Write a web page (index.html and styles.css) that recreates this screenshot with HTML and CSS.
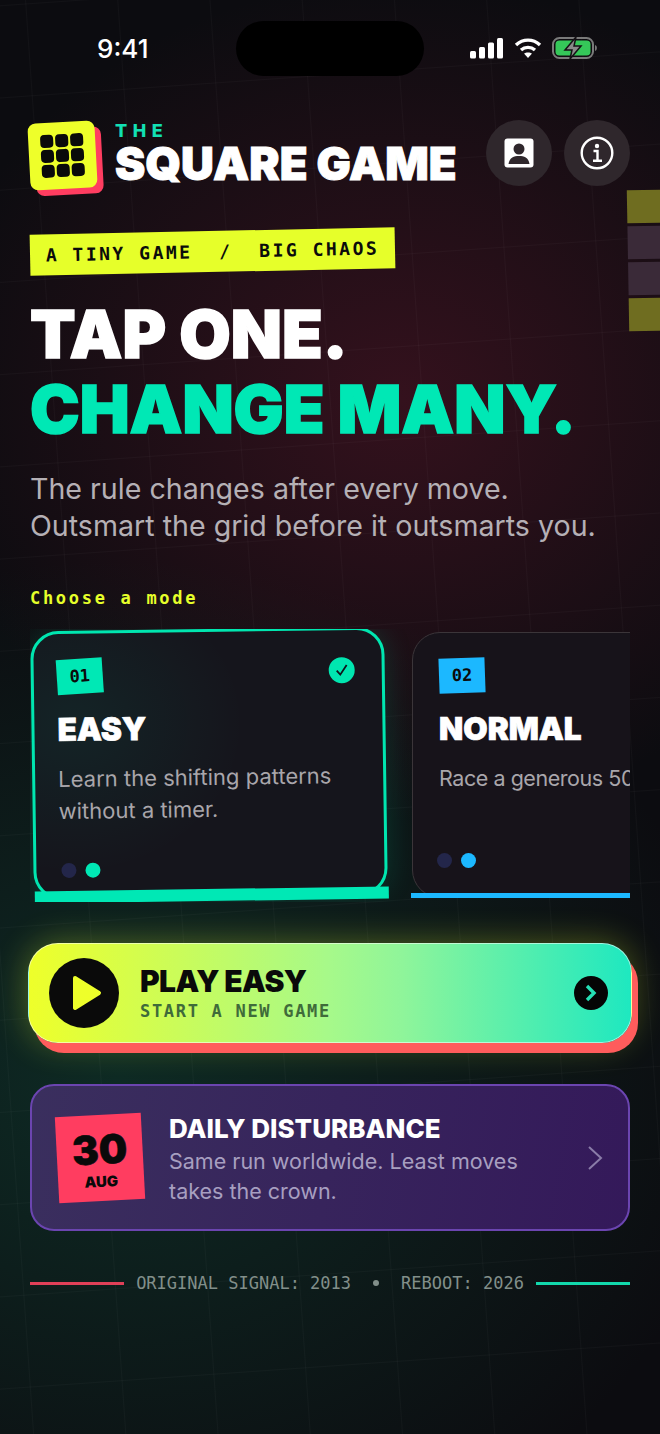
FILE: index.html
```html
<!DOCTYPE html>
<html lang="en">
<head>
    <meta charset="UTF-8">
    <meta name="viewport" content="width=device-width, initial-scale=1.0">
    <title>The Square Game</title>
    <link rel="stylesheet" href="styles.css">
</head>
<body>
    <div class="screen">
        <div class="grid-lines"></div>
        <div class="island"></div>

        <div class="deco">
            <span class="deco-olive"></span>
            <span class="deco-dim"></span>
            <span class="deco-dim"></span>
            <span class="deco-olive"></span>
        </div>

        <div class="status">
            <span class="time">9:41</span>
            <div class="status-icons">
                <svg width="34" height="21" viewBox="0 0 34 21" fill="#fff">
                    <rect x="0" y="13" width="6" height="7.5" rx="1.5"/>
                    <rect x="9" y="9" width="6" height="11.5" rx="1.5"/>
                    <rect x="18" y="4.5" width="6" height="16" rx="1.5"/>
                    <rect x="27" y="0" width="6" height="20.5" rx="1.5"/>
                </svg>
                <svg width="28" height="22" viewBox="0 0 28 22" fill="none" stroke="#fff" stroke-width="3.4">
                    <path d="M2 8 C9 1.5 19 1.5 26 8"/>
                    <path d="M7 13 C11 9.5 17 9.5 21 13"/>
                    <path d="M14 21 L10 16.5 C12 15 16 15 18 16.5 Z" fill="#fff" stroke="none"/>
                </svg>
                <svg width="46" height="24" viewBox="0 0 46 24">
                    <rect x="1" y="2" width="40" height="20" rx="6.5" fill="none" stroke="#7a7a7a" stroke-width="2"/>
                    <rect x="3.5" y="4.5" width="35" height="15" rx="4" fill="#35c759"/>
                    <path d="M43 9 C45.5 9.5 45.5 14.5 43 15 Z" fill="#7a7a7a"/>
                    <path d="M24 1 L13 14 H20 L18 23 L29 10 H22 Z" fill="#8a8a8a" stroke="#141014" stroke-width="1.5"/>
                </svg>
            </div>
        </div>

        <main class="content">
            <header class="header">
                <div class="brand">
                    <div class="mark">
                        <i></i><i></i><i></i><i></i><i></i><i></i><i></i><i></i><i></i>
                    </div>
                    <div class="wordmark">
                        <span class="the">THE</span>
                        <span class="name">SQUARE GAME</span>
                    </div>
                </div>
                <div class="header-btns">
                    <button class="round-btn">
                        <svg width="30" height="30" viewBox="0 0 30 30">
                            <rect x="0.5" y="0.5" width="29" height="29" rx="3" fill="#fff"/>
                            <circle cx="15" cy="11" r="5.5" fill="#2f272c"/>
                            <path d="M4.5 26 C5.5 19.5 10 18 15 18 C20 18 24.5 19.5 25.5 26 Z" fill="#2f272c"/>
                        </svg>
                    </button>
                    <button class="round-btn">
                        <svg width="34" height="34" viewBox="0 0 34 34" fill="none" stroke="#fff">
                            <circle cx="17" cy="17" r="15.3" stroke-width="2.4"/>
                            <circle cx="17" cy="10" r="2.2" fill="#fff" stroke="none"/>
                            <path d="M13.5 15 H17.5 V24.5 M13 24.8 H22" stroke-width="2.4"/>
                        </svg>
                    </button>
                </div>
            </header>

            <div class="tag">A TINY GAME&nbsp;&nbsp;/&nbsp;&nbsp;BIG CHAOS</div>

            <h1 class="hero">TAP ONE.<br><span class="hero-accent">CHANGE MANY.</span></h1>
            <p class="lead">The rule changes after every move.<br>Outsmart the grid before it outsmarts you.</p>

            <div class="section-label">Choose a mode</div>

            <div class="modes">
                <div class="mode-card mode-easy">
                    <span class="badge">01</span>
                    <span class="check">
                        <svg width="14" height="14" viewBox="0 0 14 14" fill="none" stroke="#10131a" stroke-width="1.8">
                            <path d="M2 7.5 L5.5 11.5 L12 2"/>
                        </svg>
                    </span>
                    <h2>EASY</h2>
                    <p>Learn the shifting patterns without a timer.</p>
                    <div class="dots"><i></i><i></i></div>
                    <div class="mode-bar"></div>
                </div>
                <div class="mode-card mode-normal">
                    <span class="badge">02</span>
                    <h2>NORMAL</h2>
                    <p>Race a generous 50 second clock.</p>
                    <div class="dots"><i></i><i></i></div>
                    <div class="mode-bar"></div>
                </div>
            </div>

            <button class="play">
                <span class="play-icon">
                    <svg width="30" height="36" viewBox="0 0 30 36">
                        <path d="M3 3 L27 18 L3 33 Z" fill="#eeff2a" stroke="#eeff2a" stroke-width="4" stroke-linejoin="round"/>
                    </svg>
                </span>
                <span class="play-text">
                    <strong>PLAY EASY</strong>
                    <small>START A NEW GAME</small>
                </span>
                <span class="play-arrow">
                    <svg width="12" height="18" viewBox="0 0 12 18" fill="none" stroke="#25e0b5" stroke-width="3.4">
                        <path d="M2 2 L9 9 L2 16"/>
                    </svg>
                </span>
            </button>

            <div class="daily">
                <div class="date">
                    <span class="date-num">30</span>
                    <span class="date-month">AUG</span>
                </div>
                <div class="daily-text">
                    <h3>DAILY DISTURBANCE</h3>
                    <p>Same run worldwide. Least moves takes the crown.</p>
                </div>
                <svg class="daily-arrow" width="16" height="26" viewBox="0 0 16 26" fill="none" stroke="#8a7ca8" stroke-width="2">
                    <path d="M2 2 L14 13 L2 24"/>
                </svg>
            </div>

            <footer class="signal">
                <span class="line line-red"></span>
                <span>ORIGINAL SIGNAL: 2013</span>
                <span class="sep"></span>
                <span>REBOOT: 2026</span>
                <span class="line line-teal"></span>
            </footer>
        </main>
    </div>
</body>
</html>
```

FILE: styles.css
```css
* {
    box-sizing: border-box;
}
body {
    margin: 0;
    background: #0b0c10;
    font-family: Inter, "Liberation Sans", sans-serif;
}
.screen {
    position: relative;
    width: 660px;
    height: 1434px;
    overflow: hidden;
    background:
        radial-gradient(ellipse 480px 420px at 400px 400px, rgba(92,22,42,0.5), rgba(92,22,42,0) 100%),
        radial-gradient(ellipse 620px 520px at 120px 1080px, rgba(16,84,64,0.42), rgba(16,84,64,0) 100%),
        #0c0c10;
}
.grid-lines {
    position: absolute;
    left: -200px;
    top: -200px;
    width: 1060px;
    height: 1840px;
    transform: rotate(-4deg);
    background-image:
        linear-gradient(rgba(255,255,255,0.028) 1px, transparent 1px),
        linear-gradient(90deg, rgba(255,255,255,0.028) 1px, transparent 1px);
    background-size: 92px 92px;
}
.island {
    position: absolute;
    left: 236px;
    top: 21px;
    width: 188px;
    height: 55px;
    border-radius: 28px;
    background: #000;
}
.deco {
    position: absolute;
    left: 628px;
    top: 190px;
    display: flex;
    flex-direction: column;
    gap: 3px;
    transform: rotate(-1deg);
}
.deco span {
    display: block;
    width: 40px;
    height: 33px;
}
.deco-olive {
    background: #6f6d20;
}
.deco-dim {
    background: #3a2a38;
}

.status {
    position: relative;
    display: flex;
    justify-content: space-between;
    align-items: center;
    height: 96px;
    padding: 0 62px 0 97px;
}
.time {
    color: #fff;
    font-size: 26px;
    font-weight: 500;
}
.status-icons {
    display: flex;
    align-items: center;
    gap: 10px;
}

.content {
    position: relative;
    padding: 24px 30px 0;
}
.header {
    display: flex;
    justify-content: space-between;
    align-items: flex-start;
    height: 77px;
}
.brand {
    display: flex;
    gap: 19px;
}
.mark {
    display: grid;
    grid-template-columns: repeat(3, 13px);
    grid-auto-rows: 13px;
    gap: 2px;
    align-content: center;
    justify-content: center;
    width: 67px;
    height: 67px;
    margin: 2px 0 0 -1px;
    border-radius: 8px;
    background: #eeff2a;
    box-shadow: 6px 6px 0 #ff3d60;
    transform: rotate(-3deg);
}
.mark i {
    border-radius: 4px;
    background: #0a0a0a;
}
.wordmark {
    display: flex;
    flex-direction: column;
}
.the {
    color: #12e0b4;
    font-size: 18px;
    font-weight: 800;
    line-height: 22px;
    letter-spacing: 5.5px;
}
.name {
    color: #fff;
    font-size: 45.5px;
    font-weight: 900;
    line-height: 44px;
    -webkit-text-stroke: 1px #fff;
}
.header-btns {
    display: flex;
    gap: 12px;
}
.round-btn {
    display: flex;
    align-items: center;
    justify-content: center;
    width: 66px;
    height: 66px;
    padding: 0;
    border: none;
    border-radius: 50%;
    background: #2f272c;
}

.tag {
    width: 365px;
    height: 41px;
    margin-top: 34px;
    color: #0b0b0b;
    background: #e6ff2a;
    font-family: "DejaVu Sans Mono", monospace;
    font-size: 18px;
    font-weight: 700;
    line-height: 41px;
    letter-spacing: 2.5px;
    text-align: center;
    transform: rotate(-1.2deg);
}
.hero {
    margin: 25px 0 0;
    color: #fff;
    font-size: 66.5px;
    font-weight: 900;
    line-height: 75px;
    -webkit-text-stroke: 1.5px currentColor;
}
.hero-accent {
    color: #00e8b5;
}
.lead {
    margin: 23px 0 0;
    color: #b5b0b5;
    font-size: 28.6px;
    line-height: 37px;
}
.section-label {
    margin-top: 43px;
    color: #e6ff2a;
    font-family: "DejaVu Sans Mono", monospace;
    font-size: 17px;
    font-weight: 700;
    line-height: 22px;
    letter-spacing: 2.7px;
}

.modes {
    display: flex;
    gap: 26px;
    height: 273px;
    margin-top: 20px;
    overflow: hidden;
}
.mode-card {
    position: relative;
    flex: none;
    padding: 25px 23px 0;
    border-radius: 28px;
}
.mode-card h2 {
    margin: 16px 0 0;
    color: #fff;
    font-size: 31.5px;
    font-weight: 900;
    line-height: 40px;
    -webkit-text-stroke: 0.7px #fff;
}
.mode-card p {
    margin: 13px 0 0;
    color: #a9a6ab;
    font-size: 22px;
    line-height: 32px;
}
.badge {
    display: block;
    width: 46px;
    height: 35px;
    color: #0b0b0b;
    font-family: "DejaVu Sans Mono", monospace;
    font-size: 17px;
    font-weight: 700;
    line-height: 35px;
    text-align: center;
    transform: rotate(-3deg);
}
.check {
    position: absolute;
    top: 27px;
    right: 27px;
    display: flex;
    align-items: center;
    justify-content: center;
    width: 26px;
    height: 26px;
    border-radius: 50%;
    background: #00e6b0;
}
.dots {
    position: absolute;
    left: 25px;
    display: flex;
    gap: 9px;
}
.dots i {
    width: 15px;
    height: 15px;
    border-radius: 50%;
    background: #23264a;
}
.mode-bar {
    position: absolute;
    left: -2px;
    right: -4px;
}
.mode-easy {
    width: 354px;
    height: 269px;
    margin-left: 2px;
    border: 3px solid #00e6b0;
    background: radial-gradient(ellipse 170px 150px at 40px 90px, rgba(0,230,176,0.07), rgba(0,230,176,0)), #15151c;
    box-shadow: 0 0 30px rgba(0,230,176,0.16);
    transform: rotate(-0.8deg);
}
.mode-easy .badge,
.mode-easy .dots i:last-child,
.mode-easy .mode-bar {
    background: #00e8b5;
}
.mode-easy .dots {
    bottom: 19px;
}
.mode-easy .mode-bar {
    bottom: -6px;
    height: 12px;
}
.mode-normal {
    width: 340px;
    height: 266px;
    margin-top: 3px;
    padding-left: 26px;
    border: 1.5px solid #3b3539;
    background: #17131a;
}
.mode-normal p {
    font-size: 21.5px;
    letter-spacing: -0.45px;
    white-space: nowrap;
}
.mode-normal .badge,
.mode-normal .dots i:last-child,
.mode-normal .mode-bar {
    background: #1cb8ff;
}
.mode-normal .badge {
    transform: rotate(-2deg);
}
.mode-normal .dots {
    bottom: 29px;
    left: 24px;
}
.mode-normal .mode-bar {
    bottom: -1px;
    height: 5px;
}

.play {
    display: flex;
    align-items: center;
    width: 604px;
    height: 100px;
    margin: 41px 0 0 -2px;
    padding: 0 23px 0 20px;
    border: 1.5px solid rgba(255,255,255,0.55);
    border-radius: 30px;
    background: linear-gradient(90deg, #eeff2a, #a6f98a 50%, #8ff59a 62%, #1ee8c0);
    box-shadow: 6px 10px 0 #ff5c5c, 0 0 34px rgba(230,255,42,0.32);
    font-family: inherit;
    text-align: left;
}
.play-icon {
    display: flex;
    align-items: center;
    justify-content: center;
    width: 70px;
    height: 70px;
    padding-left: 5px;
    border-radius: 50%;
    background: #0a0a0a;
}
.play-text {
    display: flex;
    flex-direction: column;
    flex: 1;
    margin-left: 21px;
}
.play-text strong {
    color: #0a0a0a;
    font-size: 30px;
    font-weight: 900;
    line-height: 37px;
    letter-spacing: -0.6px;
}
.play-text small {
    color: #3f6b3a;
    font-family: "DejaVu Sans Mono", monospace;
    font-size: 17px;
    font-weight: 700;
    line-height: 23px;
    letter-spacing: 1.7px;
}
.play-arrow {
    display: flex;
    align-items: center;
    justify-content: center;
    width: 34px;
    height: 34px;
    border-radius: 50%;
    background: #050505;
}

.daily {
    display: flex;
    align-items: center;
    height: 147px;
    margin-top: 41px;
    padding: 0 25px 0 25px;
    border: 2px solid #6b45b0;
    border-radius: 24px;
    background: linear-gradient(100deg, #3a2f5e, #34195a);
}
.date {
    display: flex;
    flex: none;
    flex-direction: column;
    align-items: center;
    justify-content: center;
    width: 86px;
    height: 86px;
    padding-top: 6px;
    background: #ff3d60;
    color: #0a0a0a;
    font-weight: 900;
    transform: rotate(-3deg);
}
.date-num {
    font-size: 40px;
    line-height: 40px;
    -webkit-text-stroke: 0.5px #0a0a0a;
}
.date-month {
    margin-top: 2px;
    font-size: 15px;
    line-height: 20px;
}
.daily-text {
    flex: 1;
    margin-left: 26px;
    padding-top: 4px;
}
.daily-text h3 {
    margin: 0 0 2px;
    color: #fff;
    font-size: 26px;
    font-weight: 800;
    line-height: 30px;
}
.daily-text p {
    width: 380px;
    margin: 0;
    color: #a79fc0;
    font-size: 21.5px;
    line-height: 30px;
}

.signal {
    display: flex;
    align-items: center;
    height: 22px;
    margin-top: 41px;
    color: #828f8a;
    font-family: "DejaVu Sans Mono", monospace;
    font-size: 17px;
}
.line {
    flex: 1;
    height: 3px;
}
.line-red {
    margin-right: 12px;
    background: #e04058;
}
.line-teal {
    margin-left: 12px;
    background: #12d8ac;
}
.sep {
    width: 6px;
    height: 6px;
    margin: 0 22px;
    border-radius: 50%;
    background: #828f8a;
}
```
